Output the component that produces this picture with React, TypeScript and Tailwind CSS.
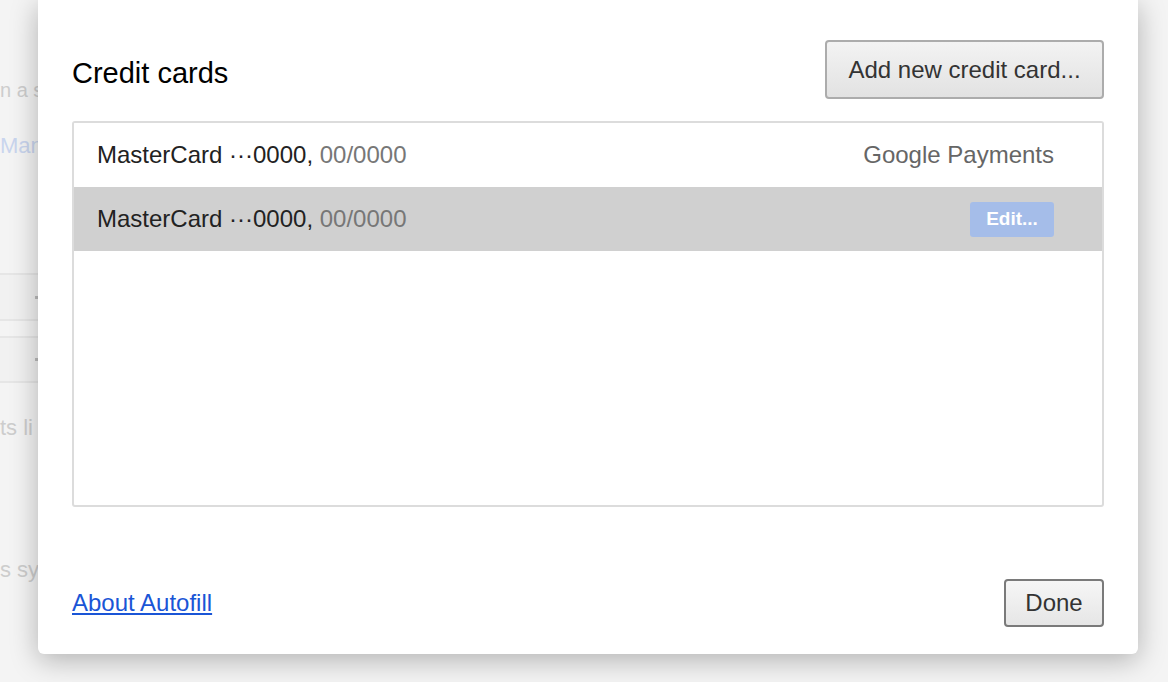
import React from 'react';

const Row: React.FC<{ selected?: boolean; right?: React.ReactNode }> = ({ selected, right }) => (
    <div className={`flex h-[64px] items-center justify-between pl-[23px] pr-[48px] ${selected ? 'bg-[#d0d0d0]' : 'bg-white'}`}>
        <span className="text-[24px] text-[#222]">
            MasterCard ···0000, <span className="text-[#777]">00/0000</span>
        </span>
        {right}
    </div>
);

const Backdrop: React.FC = () => (
    <div className="flex w-[60px] flex-col text-[22px] text-[#cdcdcd]">
        <div className="mt-[76px] h-[28px] whitespace-nowrap text-[20px] leading-[28px]">n a s</div>
        <div className="mt-[28px] h-[28px] whitespace-nowrap leading-[28px] text-[#c9d5ee]">Man</div>
        <div className="mt-[113px] flex h-[48px] items-center justify-end border-y-2 border-[#e6e6e6] bg-[#f1f1f1] pr-[22px]">
            <div className="h-[3px] w-[3px] bg-[#bbb]" />
        </div>
        <div className="mt-[15px] flex h-[47px] items-center justify-end border-y-2 border-[#e6e6e6] bg-[#f1f1f1] pr-[22px]">
            <div className="h-[3px] w-[3px] bg-[#bbb]" />
        </div>
        <div className="mt-[31px] h-[28px] whitespace-nowrap leading-[28px]">ts li</div>
        <div className="mt-[114px] h-[28px] whitespace-nowrap leading-[28px]">s sy</div>
    </div>
);

const App: React.FC = () => {
    return (
        <div className="relative h-[682px] w-[1168px] overflow-hidden bg-[#f4f4f4] font-['Liberation_Sans',Arial,sans-serif]">
            <Backdrop />
            <div className="absolute left-[38px] top-0 flex h-[654px] w-[1100px] flex-col rounded-b-[6px] bg-white px-[34px] pb-[27px] pt-[40px] shadow-[0_6px_28px_rgba(0,0,0,0.28)]">
                <div className="flex items-center justify-between">
                    <h2 className="mt-[8px] text-[29px] text-[#000]">Credit cards</h2>
                    <button className="h-[59px] w-[279px] rounded-[4px] border-2 border-[#acacac] bg-gradient-to-b from-[#f3f3f3] to-[#e2e2e2] text-[24px] text-[#333]">
                        Add new credit card...
                    </button>
                </div>
                <div className="mt-[22px] h-[386px] overflow-hidden rounded-[3px] border-2 border-[#dcdcdc]">
                    <Row right={<span className="text-[24px] text-[#666]">Google Payments</span>} />
                    <Row
                        selected
                        right={
                            <span className="flex h-[35px] w-[84px] items-center justify-center rounded-[3px] bg-[#a5bde9] text-[19px] font-bold text-white">
                                Edit...
                            </span>
                        }
                    />
                </div>
                <div className="mt-auto flex items-center justify-between">
                    <a href="#" className="text-[24px] text-[#1a55d6] underline">About Autofill</a>
                    <button className="h-[48px] w-[100px] rounded-[4px] border-2 border-[#7a7a7a] bg-gradient-to-b from-[#f6f6f6] to-[#e6e6e6] text-[24px] text-[#333]">
                        Done
                    </button>
                </div>
            </div>
        </div>
    );
};

export default App;
